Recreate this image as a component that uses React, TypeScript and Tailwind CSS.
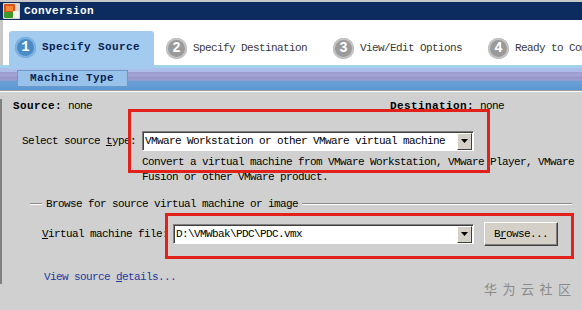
import React from 'react';

const mono = { fontFamily: '"Liberation Mono", "DejaVu Sans Mono", monospace' };

const Step = ({ n, label, active }: { n: number; label: string; active?: boolean }) => (
  <div className="flex shrink-0 items-center">
    <div
      className={`flex h-[21px] w-[21px] shrink-0 items-center justify-center rounded-full text-[14px] font-bold text-white ${
        active
          ? 'bg-[#4a8cc8] shadow-[inset_0_0_0_2px_#7fb2e0]'
          : 'bg-[#9a9a9a] shadow-[inset_0_0_0_2px_#c4c4c4]'
      }`}
    >
      {n}
    </div>
    <span
      className={`ml-[6px] whitespace-nowrap text-[11px] ${
        active ? 'font-bold tracking-[0.4px] text-[#0a1f52]' : 'tracking-[-0.6px] text-[#3a3a3a]'
      }`}
    >
      {label}
    </span>
  </div>
);

const DropButton = () => (
  <div className="flex h-[17px] w-[15px] shrink-0 items-center justify-center border border-t-white border-l-white border-b-[#404040] border-r-[#404040] bg-[#d4d0c8]">
    <svg width="7" height="4" viewBox="0 0 7 4">
      <path d="M0 0h7L3.5 4z" fill="#000" />
    </svg>
  </div>
);

export default function App() {
  return (
    <div className="relative h-[310px] w-[582px] overflow-hidden bg-[#d0d0d0] text-black" style={mono}>
      {/* title bar */}
      <div className="border-t-2 border-[#c8c8c8]">
        <div className="flex h-[18px] items-center bg-[#0c2c60] pl-[3px]">
          <svg width="17" height="16" viewBox="0 0 17 16">
            <rect x="0" y="0" width="17" height="16" rx="1" fill="#d8d8d0" />
            <rect x="1" y="1" width="11" height="9" rx="1" fill="#e0501c" />
            <rect x="3" y="3" width="7" height="5" fill="#f08a3a" />
            <rect x="1" y="9" width="9" height="6" rx="1" fill="#3c9a2c" />
            <rect x="10" y="8" width="6" height="7" fill="#f4f4ec" />
          </svg>
          <span className="ml-[4px] text-[11px] font-bold tracking-[0.4px] text-white">Conversion</span>
        </div>
      </div>

      {/* steps header */}
      <div className="flex h-[45px] items-end overflow-hidden border-l-[3px] border-[#c8c8c8] bg-white pl-[6px]">
        <div className="flex h-[34px] w-[145px] shrink-0 items-start rounded-t-[3px] bg-[#a2cbef] pl-[6px] pt-[6px]">
          <Step n={1} label="Specify Source" active />
        </div>
        <div className="mb-[6px] ml-[12px] shrink-0">
          <Step n={2} label="Specify Destination" />
        </div>
        <div className="mb-[6px] ml-[26px] shrink-0">
          <Step n={3} label="View/Edit Options" />
        </div>
        <div className="mb-[6px] ml-[26px] shrink-0">
          <Step n={4} label="Ready to Complete" />
        </div>
      </div>

      {/* band */}
      <div className="h-[25px] bg-[linear-gradient(to_bottom,#a3d2ea_0px,#a3d2ea_3px,#adbde9_3px,#adbde9_7px,#9a9ad0_7px,#a6a6d8_10px,#9494c8_13px,#a0a0d2_15px,#6ea0d6_16px,#5a98d2_25px)]">
        <div className="ml-[9px] h-[4px] w-[145px] bg-[#a2cbef]" />
        <div className="ml-[17px] mt-[1px] flex h-[17px] w-[111px] items-center border border-[#6a98c8] bg-[#98c2ea] pl-[12px]">
          <span className="text-[11px] font-bold tracking-[0.4px] text-[#0a1f52]">Machine Type</span>
        </div>
      </div>
      <div className="h-[1px] bg-[#9c9c9c]" />
      <div className="h-[1px] bg-white" />

      {/* body */}
      <div className="border-l-2 border-[#808080] pl-[11px] text-[11px] tracking-[-0.6px]">
        <div className="mt-[7px] flex h-[14px] items-center">
          <span className="w-[377px]">
            <b className="tracking-[0.4px]">Source:</b> none
          </span>
          <span>
            <b className="tracking-[0.4px]">Destination:</b> none
          </span>
        </div>

        <div className="mt-[18px] flex h-[20px] items-center">
          <span className="w-[129px] pl-[9px]">
            Select source <u>t</u>ype:
          </span>
          <div className="flex h-[20px] w-[332px] items-center justify-between border border-t-[#808080] border-l-[#808080] border-b-white border-r-white bg-white pl-[2px] pr-[1px] shadow-[inset_1px_1px_0_#404040]">
            <span className="whitespace-nowrap">VMware Workstation or other VMware virtual machine</span>
            <DropButton />
          </div>
        </div>

        <div className="ml-[129px] mt-[4px] whitespace-nowrap leading-[15px]">
          <div>Convert a virtual machine from VMware Workstation, VMware Player, VMware</div>
          <div>Fusion or other VMware product.</div>
        </div>

        <div className="mt-[12px] flex h-[14px] items-center">
          <div className="ml-[17px] w-[12px] border-t border-b border-t-[#8c8c8c] border-b-white" />
          <span className="ml-[4px] whitespace-nowrap">Browse for source virtual machine or image</span>
          <div className="ml-[4px] mr-[10px] flex-1 border-t border-b border-t-[#8c8c8c] border-b-white" />
        </div>

        <div className="mt-[11px] flex h-[24px] items-center">
          <span className="w-[160px] pl-[29px]">
            <u>V</u>irtual machine file:
          </span>
          <div className="flex h-[20px] w-[301px] items-center justify-between border border-t-[#808080] border-l-[#808080] border-b-white border-r-white bg-white pl-[2px] pr-[1px] shadow-[inset_1px_1px_0_#404040]">
            <span className="whitespace-nowrap">D:\VMWbak\PDC\PDC.vmx</span>
            <DropButton />
          </div>
          <div className="ml-[10px] flex h-[24px] w-[74px] items-center justify-center border border-t-white border-l-white border-b-[#404040] border-r-[#404040] bg-[#d4d0c8] shadow-[inset_-1px_-1px_0_#808080]">
            <span>
              B<u>r</u>owse...
            </span>
          </div>
        </div>

        <div className="mt-[24px] flex h-[14px] items-center pl-[31px] text-[#1e3aa0]">
          <span>
            View source <u>d</u>etails...
          </span>
        </div>
      </div>

      {/* watermark */}
      <div
        className="absolute left-[484px] top-[279px] text-[13px] tracking-[5.5px] text-[#8a8a8a]"
        style={{ fontFamily: '"Noto Sans CJK SC", sans-serif' }}
      >
        华为云社区
      </div>

      {/* annotation boxes */}
      <div className="absolute left-[128px] top-[109px] h-[64px] w-[362px] border-[3px] border-[#e3211b]" />
      <div className="absolute left-[165px] top-[213px] h-[46px] w-[409px] border-[3px] border-[#e3211b]" />
    </div>
  );
}
